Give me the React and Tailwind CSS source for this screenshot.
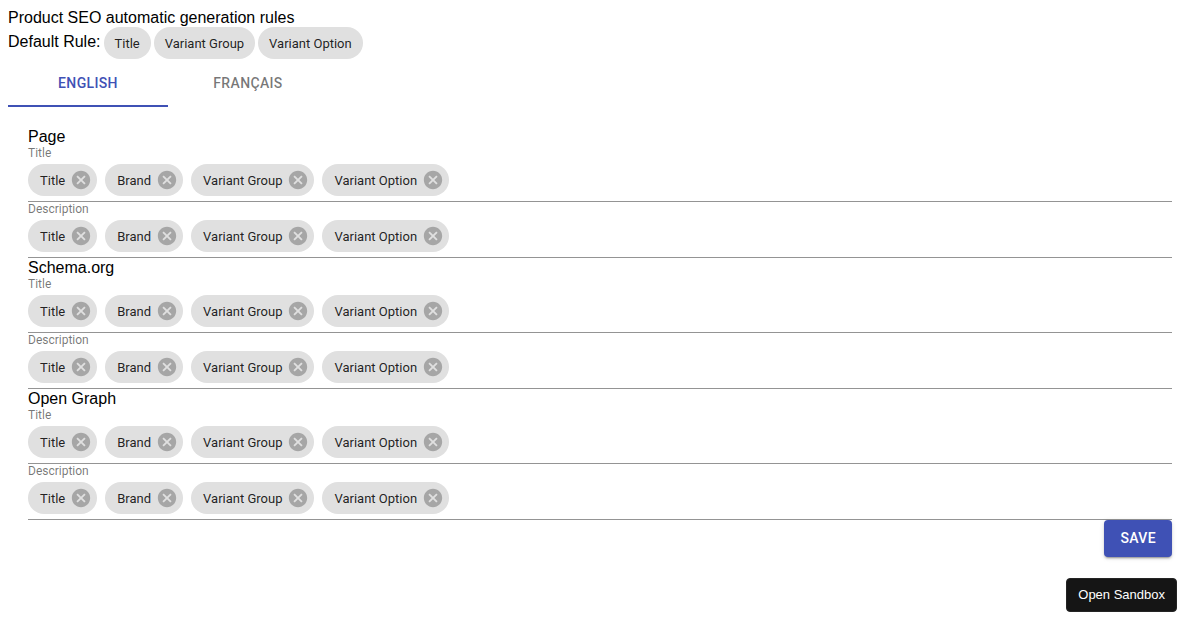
import React, { useState } from 'react';

const LANGUAGES = [
  { id: 'en', label: 'English' },
  { id: 'fr', label: 'Français' },
];

const DEFAULT_RULE = ['Title', 'Variant Group', 'Variant Option'];
const INITIAL_CHIPS = ['Title', 'Brand', 'Variant Group', 'Variant Option'];
const SECTIONS = ['Page', 'Schema.org', 'Open Graph'];

const CancelIcon = () => (
  <svg viewBox="0 0 24 24" className="block size-[22px] fill-current" aria-hidden="true">
    <path d="M12 2C6.47 2 2 6.47 2 12s4.47 10 10 10 10-4.47 10-10S17.53 2 12 2zm5 13.59L15.59 17 12 13.41 8.41 17 7 15.59 10.59 12 7 8.41 8.41 7 12 10.59 15.59 7 17 8.41 13.41 12 17 15.59z" />
  </svg>
);

const RuleField = ({ label }) => {
  const [chips, setChips] = useState(INITIAL_CHIPS);

  const removeChip = (name) => {
    setChips(chips.filter((chip) => chip !== name));
  };

  return (
    <div role="group" aria-label={label} className="border-b border-[#949494] pb-[5px]">
      <div className="pb-1 text-xs leading-[14px] text-black/54">{label}</div>
      <ul className="flex min-h-8 flex-wrap gap-2">
        {chips.map((chip) => (
          <li
            key={chip}
            className="flex h-8 items-center gap-[5px] rounded-full bg-[#e0e0e0] pl-3 pr-[5px] text-[13px] text-black/87"
          >
            {chip}
            <button
              type="button"
              aria-label={`Remove ${chip}`}
              onClick={() => removeChip(chip)}
              className="cursor-pointer text-black/26 hover:text-black/40"
            >
              <CancelIcon />
            </button>
          </li>
        ))}
      </ul>
    </div>
  );
};

const App = () => {
  const [language, setLanguage] = useState('en');

  return (
    <div className="p-2 font-[Roboto,sans-serif] text-base leading-[19px] text-black">
      <h1 className="font-['Liberation_Sans',sans-serif]">Product SEO automatic generation rules</h1>
      <div className="flex flex-wrap items-center gap-[3px]">
        <span className="pb-[3px] font-['Liberation_Sans',sans-serif]">Default Rule:</span>
        {DEFAULT_RULE.map((rule) => (
          <span
            key={rule}
            className="flex h-8 items-center rounded-full bg-[#e0e0e0] px-[11px] text-[13px] text-black/87"
          >
            {rule}
          </span>
        ))}
      </div>

      <div role="tablist" className="flex">
        {LANGUAGES.map(({ id, label }) => (
          <button
            key={id}
            type="button"
            role="tab"
            aria-selected={language === id}
            onClick={() => setLanguage(id)}
            className={`h-12 w-40 cursor-pointer border-y-2 border-t-transparent text-sm font-medium uppercase tracking-wide ${
              language === id ? 'border-b-[#3f51b5] text-[#3f51b5]' : 'border-b-transparent text-black/54'
            }`}
          >
            {label}
          </button>
        ))}
      </div>

      <div role="tabpanel" className="px-5 pt-5">
        {SECTIONS.map((section) => (
          <section key={section}>
            <h2 className="font-['Liberation_Sans',sans-serif]">{section}</h2>
            <RuleField key={`${language}-title`} label="Title" />
            <RuleField key={`${language}-description`} label="Description" />
          </section>
        ))}
        <div className="flex justify-end">
          <button
            type="button"
            className="cursor-pointer rounded bg-[#3f51b5] px-4 py-[9px] text-sm leading-[19px] font-medium uppercase tracking-wide text-white shadow-[0_3px_1px_-2px_rgba(0,0,0,0.2),0_2px_2px_0_rgba(0,0,0,0.14),0_1px_5px_0_rgba(0,0,0,0.12)]"
          >
            Save
          </button>
        </div>
      </div>

      <button
        type="button"
        className="fixed right-[23px] bottom-[18px] cursor-pointer rounded border border-[#242424] bg-[#151515] px-[11px] py-2 font-['Liberation_Sans',sans-serif] text-[13px] leading-4 text-white"
      >
        Open Sandbox
      </button>
    </div>
  );
};

export default App;
